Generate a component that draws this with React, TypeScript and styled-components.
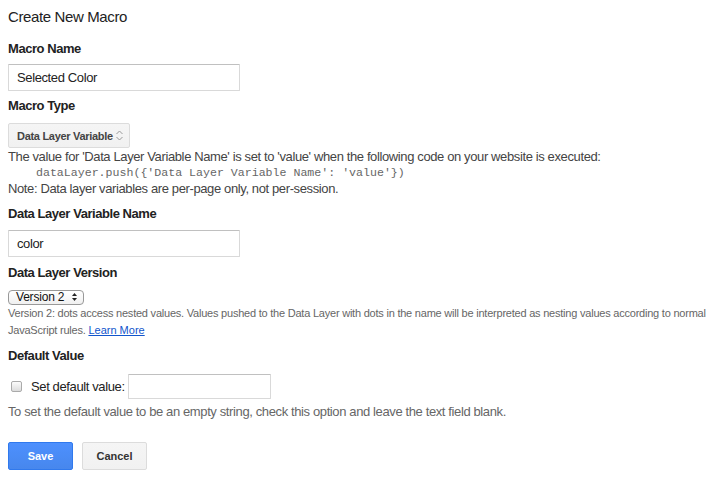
import { createGlobalStyle, styled } from "styled-components";

const GlobalStyle = createGlobalStyle`
  body {
    margin: 0;
    background: #fff;
    font-family: "Liberation Sans", Arial, sans-serif;
    letter-spacing: -0.38px;
    color: #222;
  }
`;

const Page = styled.div`
  padding: 8px;
  display: flex;
  flex-direction: column;
  align-items: flex-start;
`;

const Title = styled.div`
  font-size: 15px;
  line-height: 18px;
  color: #222;
`;

const Label = styled.div<{ $top: number }>`
  margin-top: ${({ $top }) => $top}px;
  font-size: 13px;
  line-height: 16px;
  font-weight: bold;
  letter-spacing: -0.45px;
  color: #222;
`;

const TextInput = styled.input<{ $width: number; $top: number; $height?: number }>`
  box-sizing: border-box;
  margin-top: ${({ $top }) => $top}px;
  width: ${({ $width }) => $width}px;
  height: ${({ $height }) => $height ?? 27}px;
  padding: 0 8px;
  border: 1px solid #d9d9d9;
  border-top-color: #c0c0c0;
  border-radius: 1px;
  font-family: inherit;
  font-size: 13px;
  letter-spacing: -0.38px;
  color: #222;
  outline: none;
`;

const SelectButton = styled.div`
  box-sizing: border-box;
  margin-top: 9px;
  width: 122px;
  height: 25px;
  padding: 0 6px 0 8px;
  display: flex;
  align-items: center;
  justify-content: space-between;
  white-space: nowrap;
  background: linear-gradient(#f5f5f5, #f1f1f1);
  border: 1px solid #dcdcdc;
  border-radius: 2px;
  font-size: 11px;
  font-weight: bold;
  letter-spacing: -0.3px;
  color: #444;
`;

const Help = styled.div`
  margin-top: 1px;
  font-size: 13px;
  line-height: 15.5px;
  color: #444;
`;

const Code = styled.div`
  padding-left: 28px;
  font-family: "Liberation Mono", "Courier New", monospace;
  font-size: 11.6px;
  line-height: 15.5px;
  letter-spacing: 0;
  color: #666;
`;

const SmallSelect = styled.div`
  box-sizing: border-box;
  margin-top: 9px;
  width: 76px;
  height: 15px;
  padding: 0 6px 0 7px;
  display: flex;
  align-items: center;
  justify-content: space-between;
  border: 1px solid #999;
  border-radius: 4px;
  background: linear-gradient(#fff, #f0f0f0);
  font-size: 12px;
  letter-spacing: -0.2px;
  color: #111;
`;

const Hint = styled.div<{ $size: number; $top: number }>`
  margin-top: ${({ $top }) => $top}px;
  font-size: ${({ $size }) => $size}px;
  line-height: ${({ $size }) => ($size === 11 ? 17 : 16)}px;
  letter-spacing: ${({ $size }) => ($size === 11 ? -0.22 : -0.38)}px;
  color: #666;
`;

const Link = styled.a`
  color: #15c;
  text-decoration: underline;
  letter-spacing: 0;
`;

const CheckRow = styled.div`
  margin-top: 10px;
  display: flex;
  align-items: center;
`;

const Checkbox = styled.span`
  box-sizing: border-box;
  margin: 0 9px 0 3px;
  width: 11px;
  height: 11px;
  border: 1px solid #aaa;
  border-radius: 2px;
  background: linear-gradient(#fbfbfb, #dcdcdc);
`;

const CheckLabel = styled.span`
  font-size: 13px;
  color: #222;
  margin-right: 3px;
`;

const Buttons = styled.div`
  margin-top: 22px;
  display: flex;
  gap: 9px;
`;

const Button = styled.button<{ $primary?: boolean }>`
  box-sizing: border-box;
  width: 65px;
  height: 28px;
  padding: 0;
  border-radius: 2px;
  font-family: inherit;
  font-size: 11px;
  font-weight: bold;
  letter-spacing: 0;
  border: 1px solid ${({ $primary }) => ($primary ? "#3079ed" : "#dcdcdc")};
  background: ${({ $primary }) =>
    $primary ? "linear-gradient(#4d90fe, #4787ed)" : "linear-gradient(#f5f5f5, #f1f1f1)"};
  color: ${({ $primary }) => ($primary ? "#fff" : "#333")};
`;

function UpDown() {
  return (
    <svg width="7" height="11" viewBox="0 0 7 11" fill="none" stroke="#999" strokeWidth="1">
      <path d="M0.5 4 L3.5 1 L6.5 4" />
      <path d="M0.5 7 L3.5 10 L6.5 7" />
    </svg>
  );
}

function Arrows() {
  return (
    <svg width="5" height="8" viewBox="0 0 5 8" fill="#222">
      <path d="M2.5 0 L5 3 L0 3 Z" />
      <path d="M2.5 8 L5 5 L0 5 Z" />
    </svg>
  );
}

export default function App() {
  return (
    <>
      <GlobalStyle />
      <Page>
        <Title>Create New Macro</Title>

        <Label $top={15}>Macro Name</Label>
        <TextInput $top={7} $width={232} defaultValue="Selected Color" />

        <Label $top={7}>Macro Type</Label>
        <SelectButton>
          Data Layer Variable
          <UpDown />
        </SelectButton>
        <Help>
          The value for 'Data Layer Variable Name' is set to 'value' when the following code on your
          website is executed:
        </Help>
        <Code>dataLayer.push({"{"}'Data Layer Variable Name': 'value'{"}"})</Code>
        <Help>Note: Data layer variables are per-page only, not per-session.</Help>

        <Label $top={9}>Data Layer Variable Name</Label>
        <TextInput $top={8} $width={232} defaultValue="color" />

        <Label $top={8}>Data Layer Version</Label>
        <SmallSelect>
          Version 2
          <Arrows />
        </SmallSelect>
        <Hint $size={11} $top={0}>
          Version 2: dots access nested values. Values pushed to the Data Layer with dots in the name
          will be interpreted as nesting values according to normal JavaScript rules.{" "}
          <Link href="#">Learn More</Link>
        </Hint>

        <Label $top={9}>Default Value</Label>
        <CheckRow>
          <Checkbox />
          <CheckLabel>Set default value:</CheckLabel>
          <TextInput $top={0} $width={143} $height={25} />
        </CheckRow>
        <Hint $size={13} $top={5}>
          To set the default value to be an empty string, check this option and leave the text field
          blank.
        </Hint>

        <Buttons>
          <Button $primary>Save</Button>
          <Button>Cancel</Button>
        </Buttons>
      </Page>
    </>
  );
}
